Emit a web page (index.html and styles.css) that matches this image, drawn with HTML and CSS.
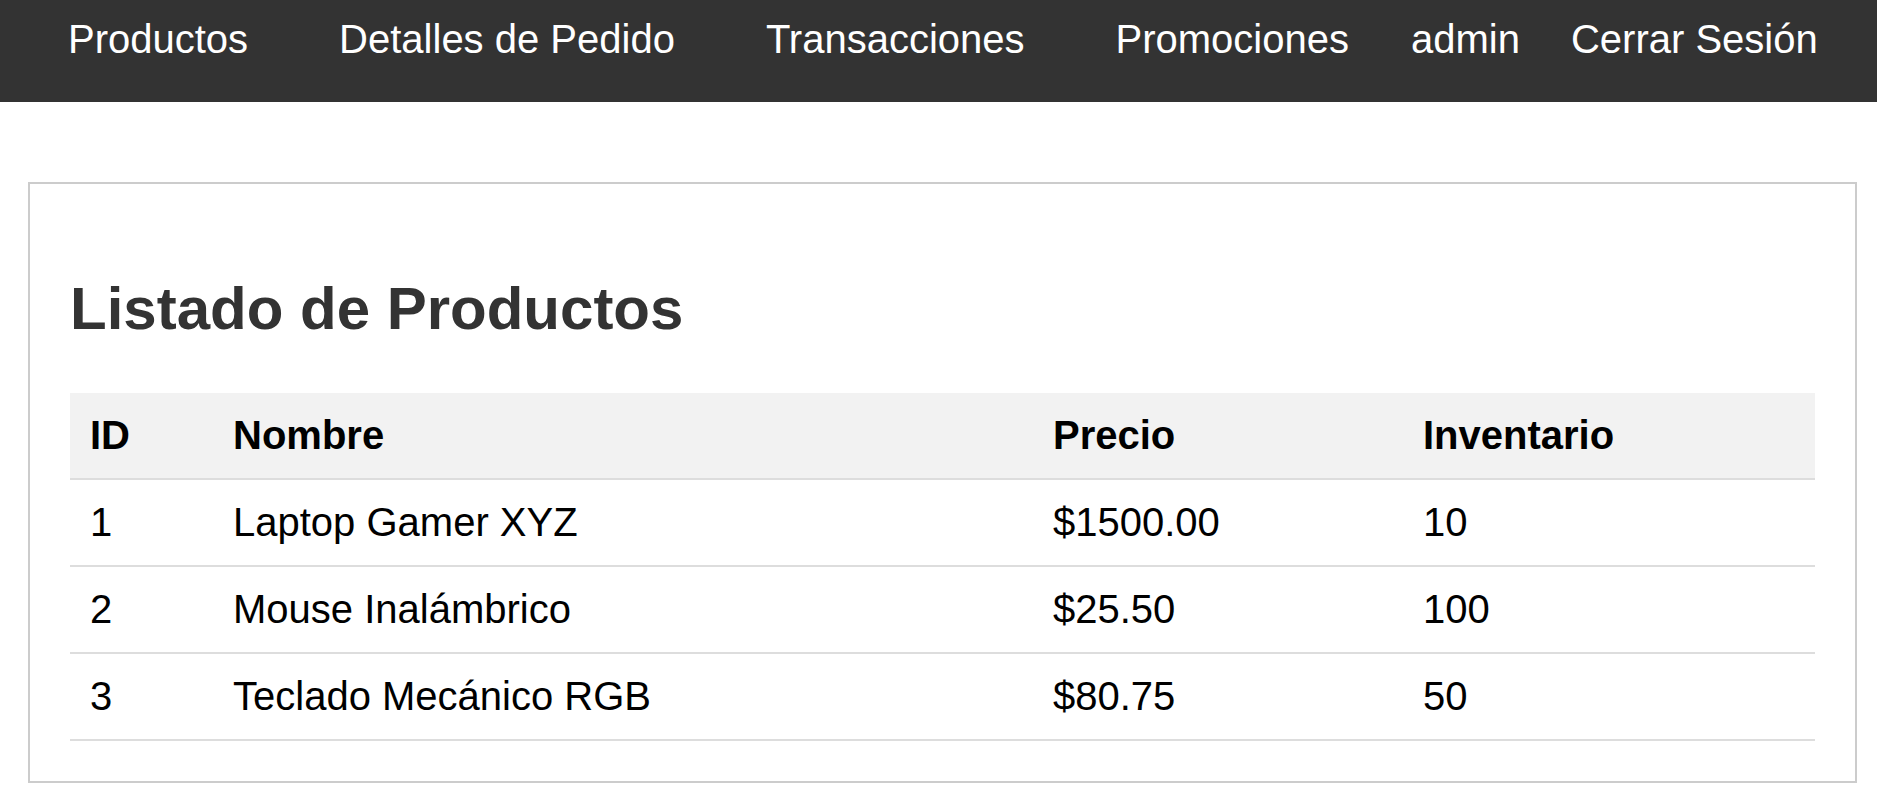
FILE: index.html
```html
<!DOCTYPE html>
<html lang="es">
<head>
<meta charset="utf-8">
<title>Listado de Productos</title>
<link rel="stylesheet" href="styles.css">
</head>
<body>
<nav class="topnav">
  <ul class="nav-links">
    <li><a href="#">Productos</a></li>
    <li><a href="#">Detalles de Pedido</a></li>
    <li><a href="#">Transacciones</a></li>
    <li><a href="#">Promociones</a></li>
  </ul>
  <span class="nav-user">admin</span>
  <a class="nav-logout" href="#">Cerrar Sesión</a>
</nav>
<main class="card">
  <h2 class="card-title">Listado de Productos</h2>
  <table class="products">
    <thead>
      <tr>
        <th class="col-id">ID</th>
        <th class="col-name">Nombre</th>
        <th class="col-price">Precio</th>
        <th class="col-stock">Inventario</th>
      </tr>
    </thead>
    <tbody>
      <tr><td>1</td><td>Laptop Gamer XYZ</td><td>$1500.00</td><td>10</td></tr>
      <tr><td>2</td><td>Mouse Inalámbrico</td><td>$25.50</td><td>100</td></tr>
      <tr><td>3</td><td>Teclado Mecánico RGB</td><td>$80.75</td><td>50</td></tr>
    </tbody>
  </table>
</main>
</body>
</html>
```
FILE: styles.css
```css
html, body {
  margin: 0;
  padding: 0;
  background: #fff;
  font-family: "Liberation Sans", Arial, sans-serif;
}

.topnav {
  display: flex;
  align-items: flex-start;
  height: 102px;
  box-sizing: border-box;
  padding: 16px 0 40px 68px;
  background: #333;
  font-size: 40px;
  line-height: 46px;
}

.topnav a,
.nav-user {
  color: #fff;
  text-decoration: none;
}

.nav-links {
  display: flex;
  gap: 91px;
  margin: 0;
  padding: 0;
  list-style: none;
}

.nav-user {
  margin-left: 62px;
}

.nav-logout {
  margin-left: 51px;
}

.card {
  display: block;
  margin: 80px 20px 0 28px;
  padding: 40px;
  border: 2px solid #ccc;
  overflow: hidden;
}

.card-title {
  margin: 50px 0;
  font-size: 60px;
  line-height: 69px;
  font-weight: bold;
  color: #333;
}

.products {
  width: 100%;
  border-collapse: collapse;
  table-layout: fixed;
  font-size: 40px;
  line-height: 45px;
  color: #000;
}

.products th,
.products td {
  padding: 20px;
  text-align: left;
  border-bottom: 2px solid #ddd;
}

.products th {
  background: #f2f2f2;
  font-weight: bold;
}

.col-id { width: 103px; }
.col-name { width: 780px; }
.col-price { width: 330px; }
.col-stock { width: auto; }
```
